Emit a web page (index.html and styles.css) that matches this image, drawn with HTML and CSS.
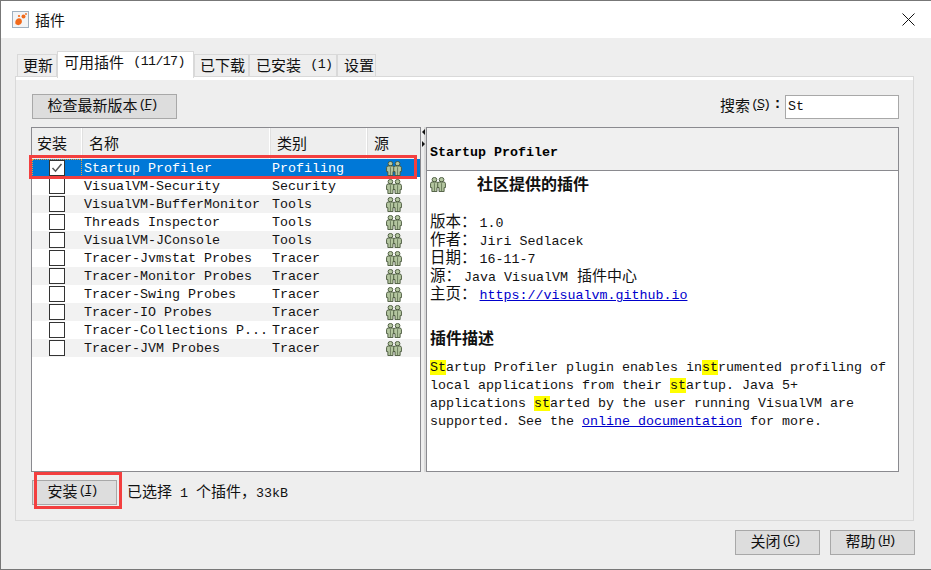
FILE: index.html
```html
<!DOCTYPE html>
<html lang="zh-CN">
<head>
<meta charset="utf-8">
<title>插件</title>
<link rel="stylesheet" href="styles.css">
</head>
<body>
<svg class="defs" width="0" height="0" aria-hidden="true">
  <symbol id="people" viewBox="0 0 17 17" preserveAspectRatio="none">
    <g fill="#b4c6a0" stroke="#46563a" stroke-width="1">
      <circle cx="4.700" cy="3" r="2.500"/>
      <path d="M.6 7.500q0-1.800 1.800-1.800h4.600q1.800 0 1.800 1.800V12H7.400v4.500H2v-4.500H.6z"/>
      <circle cx="12.300" cy="3" r="2.500"/>
      <path d="M8.200 7.500q0-1.800 1.800-1.800h4.600q1.800 0 1.800 1.800V12H15v4.500H9.600v-4.500H8.200z"/>
    </g>
    <path d="M4.700 7v9M12.300 7v9" stroke="#46563a" stroke-width=".7"/>
  </symbol>
</svg>
<div class="window">
  <header class="titlebar">
    <svg class="app-icon" width="17" height="17" viewBox="0 0 17 17">
      <rect x=".5" y=".5" width="16" height="16" fill="#f2f4f6" stroke="#9fb0c0"/>
      <path d="M3.500 13q-.8-3.500 1.500-5t4.500 .5q1.200 3-1 4.800t-5 -.3z" fill="#f26a1b"/>
      <circle cx="11.500" cy="5.500" r="2" fill="#f26a1b"/>
      <circle cx="7" cy="5" r="1.100" fill="#f26a1b"/>
      <circle cx="14" cy="3" r=".9" fill="#f26a1b"/>
    </svg>
    <span class="title">插件</span>
    <svg class="close" width="13" height="13" viewBox="0 0 13 13"><path d="M.5.500l12 12M12.500.500l-12 12" stroke="#111" stroke-width="1" fill="none"/></svg>
  </header>
  <main class="content">
    <nav class="tabs">
      <span class="tab tab-update">更新</span>
      <span class="tab tab-active">可用插件<span class="lt gap"> (11/17)</span></span>
      <span class="tab tab-down">已下载</span>
      <span class="tab tab-inst">已安装<span class="lt gap"> (1)</span></span>
      <span class="tab tab-set">设置</span>
    </nav>
    <section class="pane">
      <div class="toolbar">
        <button class="btn btn-check">检查最新版本<span class="mn">(<u>F</u>)</span></button>
        <label class="search"><span class="search-label">搜索<span class="mn">(<u>S</u>)</span><span class="colon">:</span></span><span class="search-input lt">St</span></label>
      </div>
      <div class="split">
        <div class="table">
          <div class="thead">
            <span class="th th-first">安装</span><span class="th th-name">名称</span><span class="th th-cat">类别</span><span class="th th-src">源</span>
          </div>
          <div class="row row-selected"><span class="c-check"><span class="box box-on"><svg width="14" height="14" viewBox="0 0 14 14"><path d="M2.500 7l3 3.200L11.500 3" fill="none" stroke="#555" stroke-width="1.500"/></svg></span></span><span>Startup Profiler</span><span>Profiling</span><span class="c-src"><svg class="ppl"><use href="#people"/></svg></span></div>
          <div class="row"><span class="c-check"><span class="box"></span></span><span>VisualVM-Security</span><span>Security</span><span class="c-src"><svg class="ppl"><use href="#people"/></svg></span></div>
          <div class="row row-alt"><span class="c-check"><span class="box"></span></span><span>VisualVM-BufferMonitor</span><span>Tools</span><span class="c-src"><svg class="ppl"><use href="#people"/></svg></span></div>
          <div class="row"><span class="c-check"><span class="box"></span></span><span>Threads Inspector</span><span>Tools</span><span class="c-src"><svg class="ppl"><use href="#people"/></svg></span></div>
          <div class="row row-alt"><span class="c-check"><span class="box"></span></span><span>VisualVM-JConsole</span><span>Tools</span><span class="c-src"><svg class="ppl"><use href="#people"/></svg></span></div>
          <div class="row"><span class="c-check"><span class="box"></span></span><span>Tracer-Jvmstat Probes</span><span>Tracer</span><span class="c-src"><svg class="ppl"><use href="#people"/></svg></span></div>
          <div class="row row-alt"><span class="c-check"><span class="box"></span></span><span>Tracer-Monitor Probes</span><span>Tracer</span><span class="c-src"><svg class="ppl"><use href="#people"/></svg></span></div>
          <div class="row"><span class="c-check"><span class="box"></span></span><span>Tracer-Swing Probes</span><span>Tracer</span><span class="c-src"><svg class="ppl"><use href="#people"/></svg></span></div>
          <div class="row row-alt"><span class="c-check"><span class="box"></span></span><span>Tracer-IO Probes</span><span>Tracer</span><span class="c-src"><svg class="ppl"><use href="#people"/></svg></span></div>
          <div class="row"><span class="c-check"><span class="box"></span></span><span>Tracer-Collections P...</span><span>Tracer</span><span class="c-src"><svg class="ppl"><use href="#people"/></svg></span></div>
          <div class="row row-alt"><span class="c-check"><span class="box"></span></span><span>Tracer-JVM Probes</span><span>Tracer</span><span class="c-src"><svg class="ppl"><use href="#people"/></svg></span></div>
        </div>
        <div class="divider"><i class="arrow arrow-left"></i><i class="arrow arrow-right"></i></div>
        <article class="details">
          <h2 class="d-head">Startup Profiler</h2>
          <div class="d-body">
            <div class="community"><svg class="ppl"><use href="#people"/></svg><b>社区提供的插件</b></div>
            <div class="meta">
              <div>版本：<span class="lt">1.0</span></div>
              <div>作者：<span class="lt">Jiri Sedlacek</span></div>
              <div>日期：<span class="lt">16-11-7</span></div>
              <div>源：<span class="lt">Java VisualVM </span><span class="after-lt">插件中心</span></div>
              <div>主页：<a class="lt" href="#">https://visualvm.github.io</a></div>
            </div>
            <h3 class="d-sub">插件描述</h3>
            <p class="desc"><mark>St</mark>artup Profiler plugin enables in<mark>st</mark>rumented profiling of<br>local applications from their <mark>st</mark>artup. Java 5+<br>applications <mark>st</mark>arted by the user running VisualVM are<br>supported. See the <a href="#">online documentation</a> for more.</p>
          </div>
        </article>
      </div>
      <div class="install-row">
        <button class="btn btn-install">安装<span class="mn">(<u>I</u>)</span></button>
        <span class="status">已选择<span class="lt"> 1 </span>个插件，<span class="lt">33kB</span></span>
      </div>
    </section>
    <footer class="actions">
      <button class="btn btn-foot">关闭<span class="mn">(<u>C</u>)</span></button>
      <button class="btn btn-foot">帮助<span class="mn">(<u>H</u>)</span></button>
    </footer>
  </main>
  <div class="mark-row"></div>
  <div class="mark-btn"></div>
</div>
</body>
</html>
```
FILE: styles.css
```css
* { box-sizing: border-box; }
html, body { margin: 0; padding: 0; height: 570px; overflow: hidden; background: #eee; }
.defs { position: absolute; }
body, button { font-family: "Noto Sans CJK SC", "Liberation Sans", sans-serif; font-size: 15px; color: #111; }
.lt, .mn, .row, .d-head, .desc { font-family: "Liberation Mono", "Noto Sans CJK SC", monospace; font-size: 13.33px; white-space: pre; }
.mn { letter-spacing: -2px; margin-left: 1px; padding-right: 2px; }
.colon { font-family: "Liberation Mono", monospace; font-weight: 700; margin: 0 3px 0 2px; }
.window { position: relative; width: 931px; height: 570px; border: 1px solid #777; border-right: 0; display: flex; flex-direction: column; background: #eee; }
.titlebar { height: 37px; flex: none; background: #fff; display: flex; align-items: center; padding: 0 16px 0 11px; }
.app-icon { flex: none; margin-right: 6px; }
.title { padding-bottom: 1px; }
.close { margin-left: auto; }
.content { flex: 1; padding: 14px 16px 0 14px; display: flex; flex-direction: column; min-height: 0; }
.tabs { display: flex; height: 25px; margin-bottom: -1px; align-items: flex-end; padding-left: 2px; position: relative; z-index: 1; }
.tab { height: 22px; margin-bottom: 1px; border: 1px solid #d9d9d9; border-bottom: 0; background: #eee; display: flex; align-items: center; white-space: pre; padding-bottom: 3px; }
.gap { margin-left: 2px; letter-spacing: -.65px; }
.tab-update { width: 40px; padding-left: 5px; }
.tab-active { width: 137px; height: 27px; background: #fff; padding: 0 0 7px 6px; margin-bottom: -1px; }
.tab-down { width: 55px; padding-left: 5px; }
.tab-inst { width: 88px; padding-left: 6px; }
.tab-set { width: 39px; padding-left: 6px; }
.pane { width: 899px; height: 445px; border: 1px solid #fff; border-top-width: 4px; border-left-color: #dcdcdc; padding: 14px 14px 0 15px; outline: 1px solid #d9d9d9; outline-offset: -1px; display: flex; flex-direction: column; background: #eee; }
.toolbar { display: flex; justify-content: space-between; align-items: center; height: 25px; flex: none; }
.btn { background: #ddd; border: 1px solid #a8a8a8; height: 25px; padding: 0 3px 4px 0; display: inline-flex; justify-content: center; align-items: center; color: #111; }
.btn-check, .btn-install { margin-left: 1px; }
.btn-check { width: 145px; }
.search { display: flex; align-items: center; height: 25px; line-height: 20px; }
.search-label { padding-bottom: 4px; display: flex; align-items: center; }
.search-input { width: 114px; height: 24px; background: #fff; border: 1px solid #a8a8a8; padding-left: 2px; display: flex; align-items: center; }
.split { display: flex; margin-top: 8px; height: 345px; flex: none; }
.table { width: 390px; background: #fff; border: 1px solid #8a8a8f; }
.thead { display: grid; grid-template-columns: 50px 188px 97px 1fr; height: 31px; background: #eee; }
.th { padding: 0 0 3px 5px; display: flex; align-items: center; border-right: 1px solid #fff; box-shadow: 1px 0 0 #e0e0e0; }
.th-name { padding-left: 7px; }
.th-cat { padding-left: 7px; }
.th-src { padding-left: 7px; }
.th:last-child { border: 0; box-shadow: none; }
.row { display: grid; grid-template-columns: 50px 188px 97px 1fr; height: 18px; align-items: center; color: #111; white-space: nowrap; }
.row > span:nth-child(2) { padding-left: 2px; }
.row > span:nth-child(3) { padding-left: 2px; }
.row-alt { background: #f2f2f2; }
.row-selected { background: #0078d7; color: #fff; }
.c-check { height: 18px; display: flex; justify-content: center; align-items: center; }
.row-selected .c-check { outline: 1px dotted #e89a3c; outline-offset: -1px; }
.box { width: 16px; height: 16px; border: 1px solid #333; background: #fff; display: flex; align-items: center; justify-content: center; }
.c-src { display: flex; padding-left: 19px; align-items: center; }
.ppl { width: 16px; height: 15px; flex: none; }
.divider { width: 5px; position: relative; background: #eee; border-right: 2px solid #d9d9d9; }
.arrow { position: absolute; width: 0; height: 0; border: 3px solid transparent; }
.arrow-left { top: 2px; left: -2px; border-right-color: #111; }
.arrow-right { top: 14px; left: 1px; border-left-color: #111; }
.details { width: 473px; border: 1px solid #8a8a8f; background: #fff; display: flex; flex-direction: column; }
.d-head { margin: 0; height: 43px; background: #f0f0f0; border-bottom: 1px solid #8a8a8f; font-weight: 700; display: flex; align-items: flex-end; padding: 0 0 10px 3px; color: #000; }
.d-body { padding: 2px 0 0 3px; flex: 1; }
.community { display: flex; align-items: center; height: 20px; font-size: 16px; }
.community .ppl { margin-right: 31px; margin-top: 2px; }
.meta { margin-top: 18px; font-size: 15.5px; }
.meta > div { height: 18px; line-height: 18px; white-space: pre; }
.meta .lt { margin-left: 3px; }
.after-lt { margin-left: 1px; font-size: 15px; }
.d-sub { margin: 26px 0 0; font-size: 16px; font-weight: 700; height: 20px; line-height: 20px; }
.desc { margin: 12px 0 0; line-height: 18px; color: #111; white-space: normal; }
mark { background: #ff0; color: inherit; }
a { color: #00c; text-decoration: underline; }
.install-row { display: flex; align-items: center; margin-top: 8px; height: 25px; flex: none; }
.btn-install { width: 85px; }
.status { margin-left: 10px; white-space: pre; padding-bottom: 5px; }
.actions { display: flex; justify-content: flex-end; gap: 10px; margin-top: 9px; height: 25px; flex: none; }
.btn-foot { width: 85px; }
.mark-row { position: absolute; left: 28px; top: 154px; width: 388px; height: 24px; border: 3px solid #f33f3f; pointer-events: none; }
.mark-btn { position: absolute; left: 33px; top: 471px; width: 88px; height: 37px; border: 3px solid #f33f3f; pointer-events: none; }
```
